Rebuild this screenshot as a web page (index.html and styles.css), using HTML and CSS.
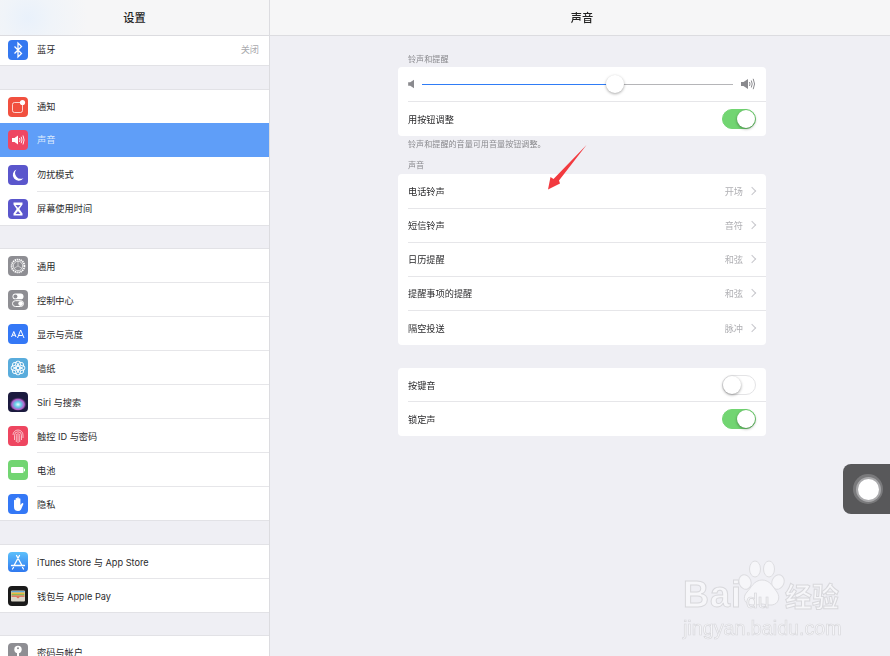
FILE: index.html
```html
<!DOCTYPE html>
<html lang="zh-CN">
<head>
<meta charset="utf-8">
<title>声音</title>
<link rel="stylesheet" href="styles.css">
</head>
<body>
<div class="app">
  <aside class="sidebar">
    <header class="side-head">设置</header>
    <div class="group group-first">
      <div class="row row-short"><span class="icon c-blue"><svg viewBox="0 0 20 20"><path d="M6.500 6.500l7 7-3.500 3.500V3l3.500 3.500-7 7" fill="none" stroke="#fff" stroke-width="1.300"/></svg></span><span class="label">蓝牙<em class="detail">关闭</em></span></div>
    </div>
    <div class="group">
      <div class="row"><span class="icon c-red"><svg viewBox="0 0 20 20"><rect x="4.500" y="5.500" width="10" height="10" rx="2" fill="none" stroke="#fff" stroke-opacity=".75" stroke-width="1"/><circle cx="14.500" cy="5.500" r="2.600" fill="#fff"/></svg></span><span class="label">通知</span></div>
      <div class="row row-active"><span class="icon c-pink"><svg viewBox="0 0 20 20"><path d="M4 8h2.500L10 5.500v9L6.500 12H4z" fill="#fff"/><path d="M11.500 8q1 2 0 4M13.200 6.800q1.600 3.200 0 6.400M15 5.500q2.200 4.500 0 9" fill="none" stroke="#fff" stroke-width=".9"/></svg></span><span class="label">声音</span></div>
      <div class="row"><span class="icon c-indigo"><svg viewBox="0 0 20 20"><path d="M8.500 4.500A5.800 5.800 0 1 0 15.500 13a5.600 5.600 0 0 1-7-8.500z" fill="#fff"/></svg></span><span class="label">勿扰模式</span></div>
      <div class="row"><span class="icon c-indigo"><svg viewBox="0 0 20 20"><path d="M5.500 3.500h9v2L11.300 10l3.200 4.500v2h-9v-2L8.700 10 5.500 5.500z" fill="#fff"/><path d="M7.500 6h5L10 9zM7.500 15l2.500-3 2.500 3z" fill="#6a63cf"/></svg></span><span class="label">屏幕使用时间</span></div>
    </div>
    <div class="group group-tight group-low">
      <div class="row"><span class="icon c-gray"><svg viewBox="0 0 20 20"><circle cx="10" cy="10" r="6.400" fill="none" stroke="#fff" stroke-width="1.800" stroke-dasharray="1.300 .7"/><circle cx="10" cy="10" r="4.700" fill="none" stroke="#fff" stroke-width=".7"/><path d="M10 10V5.500M10 10l4 2.300M10 10l-4 2.300" stroke="#fff" stroke-width=".5"/></svg></span><span class="label">通用</span></div>
      <div class="row"><span class="icon c-gray"><svg viewBox="0 0 20 20"><rect x="4.500" y="3.500" width="11" height="5.800" rx="2.900" fill="#fff"/><circle cx="7.400" cy="6.400" r="2" fill="#8e8e93"/><rect x="4.500" y="10.700" width="11" height="5.800" rx="2.900" fill="none" stroke="#fff"/><circle cx="12.600" cy="13.600" r="2.300" fill="#fff"/></svg></span><span class="label">控制中心</span></div>
      <div class="row"><span class="icon c-blue2"><svg viewBox="0 0 20 20"><path d="M3.500 13l2.300-5.500L8 13M4.300 11.200h3M9.500 14l3.200-8L16 14M10.700 11.500h4" fill="none" stroke="#fff" stroke-width="1"/></svg></span><span class="label">显示与亮度</span></div>
      <div class="row"><span class="icon c-sky"><svg viewBox="0 0 20 20"><g fill="none" stroke="#fff" stroke-width=".9"><circle cx="10" cy="5.800" r="2.700"/><circle cx="10" cy="14.200" r="2.700"/><circle cx="5.800" cy="10" r="2.700"/><circle cx="14.200" cy="10" r="2.700"/><circle cx="7" cy="7" r="2.700"/><circle cx="13" cy="7" r="2.700"/><circle cx="7" cy="13" r="2.700"/><circle cx="13" cy="13" r="2.700"/></g></svg></span><span class="label">墙纸</span></div>
      <div class="row"><span class="icon c-siri"><svg viewBox="0 0 20 20"><defs><radialGradient id="siri" cx=".5" cy=".6" r=".5"><stop offset="0" stop-color="#eafcff"/><stop offset=".35" stop-color="#62cfe8"/><stop offset=".7" stop-color="#b45cc8"/><stop offset="1" stop-color="#1b1a3e" stop-opacity="0"/></radialGradient></defs><ellipse cx="10" cy="11" rx="9" ry="7.500" fill="url(#siri)"/></svg></span><span class="label">Siri 与搜索</span></div>
      <div class="row"><span class="icon c-rose"><svg viewBox="0 0 20 20"><g fill="none" stroke="#fff" stroke-opacity=".8" stroke-width=".8"><path d="M5 9a5 5 0 0 1 10 0v3"/><path d="M6.500 14V9.300a3.500 3.500 0 0 1 7 0V14"/><path d="M8.300 16V9.500a1.700 1.700 0 0 1 3.400 0V16"/><path d="M10 9v8"/></g></svg></span><span class="label">触控 ID 与密码</span></div>
      <div class="row"><span class="icon c-green"><svg viewBox="0 0 20 20"><rect x="3" y="7" width="12.500" height="6" rx="1" fill="#fff"/><rect x="16" y="8.700" width="1" height="2.600" fill="#fff"/></svg></span><span class="label">电池</span></div>
      <div class="row"><span class="icon c-blue2"><svg viewBox="0 0 20 20"><path d="M6 10V6.500a.8.800 0 0 1 1.600 0V9.500V4.800a.8.800 0 0 1 1.600 0V9.500V4a.8.800 0 0 1 1.600 0V9.500V5a.8.800 0 0 1 1.600 0V11l1.500-1.800a.9.900 0 0 1 1.400 1L13 15.500q-1 1.500-3 1.500-4 0-4-4z" fill="#fff"/></svg></span><span class="label">隐私</span></div>
    </div>
    <div class="group group-low">
      <div class="row"><span class="icon c-store"><svg viewBox="0 0 20 20"><path d="M11.500 3.500L6 13.500M8.500 3.500l5.500 10M3.500 13.500h13M5.500 15.500l-1 1.500M14.500 15.500l1 1.500" fill="none" stroke="#fff" stroke-width="1.300" stroke-linecap="round"/></svg></span><span class="label">iTunes Store 与 App Store</span></div>
      <div class="row"><span class="icon c-wallet"><svg viewBox="0 0 20 20"><rect x="3" y="4.500" width="14" height="11" rx="1" fill="#d9d5c8"/><rect x="3.500" y="5" width="13" height="1.500" fill="#62a8d8"/><rect x="3.500" y="6.500" width="13" height="1.500" fill="#e8b93f"/><rect x="3.500" y="8" width="13" height="1.500" fill="#8cbb56"/><rect x="3.500" y="9.500" width="13" height="1.300" fill="#dd6a55"/><path d="M8 10.800h4L10 12.500z" fill="#dd6a55"/></svg></span><span class="label">钱包与 Apple Pay</span></div>
    </div>
    <div class="group group-tight">
      <div class="row"><span class="icon c-gray"><svg viewBox="0 0 20 20"><circle cx="10" cy="6.500" r="3.700" fill="#fff"/><circle cx="10" cy="5.300" r="1" fill="#8e8e93"/><path d="M9 9h2v8l-1 1-1-1z" fill="#fff"/></svg></span><span class="label">密码与帐户</span></div>
    </div>
  </aside>
  <main class="main">
    <header class="main-head">声音</header>
    <div class="content">
      <p class="sec-title sec-first">铃声和提醒</p>
      <section class="card">
        <div class="line slider-line">
          <svg class="vol vol-low" viewBox="0 0 8 12"><path d="M0 4h2.500L7 1v10L2.500 8H0z" fill="#8a8a8e"/></svg>
          <div class="slider"><i class="fill"></i><i class="rest"></i><b class="thumb"></b></div>
          <svg class="vol vol-high" viewBox="0 0 15 14"><path d="M0 5h2.500L7 2v10L2.500 9H0z" fill="#8a8a8e"/><path d="M8.500 5q1 2 0 4M10.300 3.500q1.800 3.500 0 7M12.200 1.800q2.700 5.200 0 10.400" fill="none" stroke="#8a8a8e" stroke-width="1"/></svg>
        </div>
        <div class="line"><span class="name">用按钮调整</span><span class="switch on"></span></div>
      </section>
      <p class="sec-note">铃声和提醒的音量可用音量按钮调整。</p>
      <p class="sec-title">声音</p>
      <section class="card">
        <div class="line"><span class="name">电话铃声</span><span class="val">开场</span><span class="chev"></span></div>
        <div class="line"><span class="name">短信铃声</span><span class="val">音符</span><span class="chev"></span></div>
        <div class="line"><span class="name">日历提醒</span><span class="val">和弦</span><span class="chev"></span></div>
        <div class="line"><span class="name">提醒事项的提醒</span><span class="val">和弦</span><span class="chev"></span></div>
        <div class="line"><span class="name">隔空投送</span><span class="val">脉冲</span><span class="chev"></span></div>
      </section>
      <section class="card card-gap">
        <div class="line"><span class="name">按键音</span><span class="switch"></span></div>
        <div class="line"><span class="name">锁定声</span><span class="switch on"></span></div>
      </section>
    </div>
  </main>
  <svg class="arrow" viewBox="0 0 44 50"><path d="M41.500 1L14 36.500 15 39.500 3 45.500 5.500 33 8.500 35z" fill="#f23a3f"/></svg>
  <div class="touch"><span class="touch-ring"><span class="touch-dot"></span></span></div>
  <div class="mark">
    <div class="mark-top">
      <span class="mark-bai">Bai</span>
      <svg class="mark-paw" viewBox="0 0 48 54"><g fill="#f6f6f9" stroke="#dcdce0" stroke-width="1"><ellipse cx="8" cy="22" rx="6" ry="7.500" transform="rotate(-20 8 22)"/><ellipse cx="18" cy="9" rx="5.500" ry="8"/><ellipse cx="32" cy="9" rx="5.500" ry="8"/><ellipse cx="41" cy="22" rx="6" ry="7.500" transform="rotate(20 41 22)"/><path d="M25 20c8 0 11 7 15 12 4 6 1 14-8 13-3 0-5-1-7-1s-4 1-9 1c-9 0-11-8-6-13 4-4 7-12 15-12z"/></g></svg>
      <span class="mark-du">du</span>
      <span class="mark-cn">经验</span>
    </div>
    <div class="mark-url">jingyan.baidu.com</div>
  </div>
</div>
</body>
</html>
```
FILE: styles.css
```css
* { box-sizing: border-box; }
html, body { margin: 0; padding: 0; height: 100%; overflow: hidden; }
body { background: #efeff4; font-family: "Inter", "Noto Sans CJK SC", "Liberation Sans", sans-serif; color: #2a2a2c; }
.app { position: relative; display: flex; width: 890px; height: 656px; overflow: hidden; filter: blur(.4px); }

.sidebar { width: 270px; height: 656px; flex: none; background: #efeff4; border-right: 1px solid #dcdce0; overflow: hidden; }
.side-head { height: 36px; display: flex; align-items: center; justify-content: center; padding-bottom: 1px; font-size: 11.200px; font-weight: 500; color: #222; background: radial-gradient(circle at 28px 18px, #e9f1fb 0, #f0f4f9 24px, #f6f6f7 60px); border-bottom: 1px solid #dcdce0; }
.group { margin-top: 23px; background: #fff; border-top: 1px solid #e2e2e6; border-bottom: 1px solid #e2e2e6; }
.group-first { margin-top: 0; border-top: 0; }
.group-tight { margin-top: 22px; }
.row { position: relative; height: 34px; display: flex; align-items: center; padding-left: 8px; font-size: 9.200px; background: #fff; }
.group .row:last-child { height: 33px; }
.row-short { height: 29px !important; padding-bottom: 2px; }
.row::after { content: ""; position: absolute; left: 37px; right: 0; bottom: 0; height: 1px; background: #e6e6e9; }
.row:last-child::after { display: none; }
.row-active { margin-top: -1px; background: #5f9ef8; color: #dbe9fd; }
.row-active::after { display: none; }
.row-active + .row { height: 35px; }
.group-low .label { padding-top: 1px; line-height: 15px; }
.icon { width: 20px; height: 20px; flex: none; border-radius: 4px; overflow: hidden; display: block; }
.icon svg { display: block; width: 20px; height: 20px; }
.label { flex: 1; margin-left: 9px; padding-right: 10px; display: flex; justify-content: space-between; white-space: nowrap; line-height: 14px; }
.detail { font-style: normal; color: #a9a9ad; }
.c-blue { background: #3478f0; }
.c-blue2 { background: #3478f6; }
.c-red { background: #f1503f; }
.c-pink { background: #ee4763; }
.c-indigo { background: #5a56cc; }
.c-gray { background: #8e8e93; }
.c-sky { background: #59acdc; }
.c-siri { background: #1b1a3e; }
.c-rose { background: #ee4660; }
.c-green { background: #72d572; }
.c-store { background: linear-gradient(#5cc0fb, #2f78ef); }
.c-wallet { background: #1a1a1a; }

.main { flex: 1; min-width: 0; }
.main-head { height: 36px; display: flex; align-items: center; justify-content: center; padding-left: 4px; padding-bottom: 1px; font-size: 11.200px; font-weight: 500; color: #222; background: #f6f6f7; border-bottom: 1px solid #dcdce0; }
.content { padding: 0 124px 0 128px; }
.sec-title, .sec-note { margin: 0; padding-left: 10px; font-size: 8.100px; line-height: 12px; color: #8a8a8e; white-space: nowrap; }
.sec-first { padding-top: 17px; height: 31px; }
.sec-note { padding-top: 2px; height: 16px; }
.sec-title:not(.sec-first) { height: 22px; padding-top: 7px; }
.card { background: #fff; border-radius: 4px; overflow: hidden; }
.card-gap { margin-top: 23px; }
.line { position: relative; height: 34px; display: flex; align-items: center; padding: 0 10px; font-size: 9.200px; color: #2a2a2c; }
.line:last-child { height: 35px; }
.card-gap .line:first-child { height: 33px; }
.line + .line::before { content: ""; position: absolute; left: 10px; right: 0; top: 0; height: 1px; background: #e6e6e9; }
.name { flex: 1; white-space: nowrap; }
.val { color: #b0b0b4; margin-right: 7px; }
.chev { width: 6px; height: 6px; margin-right: 1px; border-top: 1px solid #c7c7cc; border-right: 1px solid #c7c7cc; transform: rotate(45deg); margin-left: -1px; }
.switch { position: relative; width: 34px; height: 20px; border-radius: 10px; border: 1px solid #e4e4e6; background: #fff; flex: none; }
.switch::after { content: ""; position: absolute; left: 0; top: 0; width: 18px; height: 18px; border-radius: 50%; background: #fff; box-shadow: 0 1px 3px rgba(0,0,0,.4); }
.switch.on { background: #72d572; border-color: #72d572; }
.switch.on::after { left: 14px; }
.slider-line { padding: 0 10px; }
.vol { flex: none; display: block; }
.vol-low { width: 7px; height: 10px; }
.vol-high { width: 15px; height: 14px; }
.slider { position: relative; flex: 1; display: flex; align-items: center; margin: 0 8px 0 7px; height: 18px; }
.slider .fill { height: 1px; width: 192px; background: #2f7cf6; }
.slider .rest { height: 1px; flex: 1; background: #b5b5b8; }
.thumb { position: absolute; left: 184px; top: 0; width: 18px; height: 18px; border-radius: 50%; background: #fff; box-shadow: 0 1px 3px rgba(0,0,0,.35); }

.arrow { position: absolute; left: 545px; top: 144px; width: 44px; height: 50px; }
.touch { position: absolute; left: 843px; top: 464px; width: 47px; height: 50px; padding-left: 3px; background: #58585a; border-radius: 8px 0 0 8px; display: flex; align-items: center; justify-content: center; }
.touch-ring { width: 30px; height: 30px; border-radius: 50%; background: #7a7a7c; display: flex; align-items: center; justify-content: center; }
.touch-dot { width: 21px; height: 21px; border-radius: 50%; background: #fff; box-shadow: 0 0 0 2px #aaaaac; }

.mark { position: absolute; left: 683px; top: 560px; width: 165px; color: #f6f6f9; font-family: "Liberation Sans", "Noto Sans CJK SC", sans-serif; }
.mark-top { position: relative; height: 56px; }
.mark-bai { position: absolute; left: 0; top: 14px; font-size: 36px; line-height: 42px; font-weight: 700; -webkit-text-stroke: 1px #d8d8dc; letter-spacing: 1px; }
.mark-paw { position: absolute; left: 54px; top: 0; width: 48px; height: 54px; }
.mark-du { position: absolute; left: 63px; top: 30px; font-size: 21px; line-height: 22px; -webkit-text-stroke: .7px #d4d4d8; }
.mark-cn { position: absolute; left: 102px; top: 22px; font-size: 27px; line-height: 32px; white-space: nowrap; -webkit-text-stroke: 1px #d8d8dc; font-weight: 700; }
.mark-url { font-size: 19.700px; line-height: 22px; margin-top: 1px; white-space: nowrap; -webkit-text-stroke: .7px #d8d8dc; }
```
